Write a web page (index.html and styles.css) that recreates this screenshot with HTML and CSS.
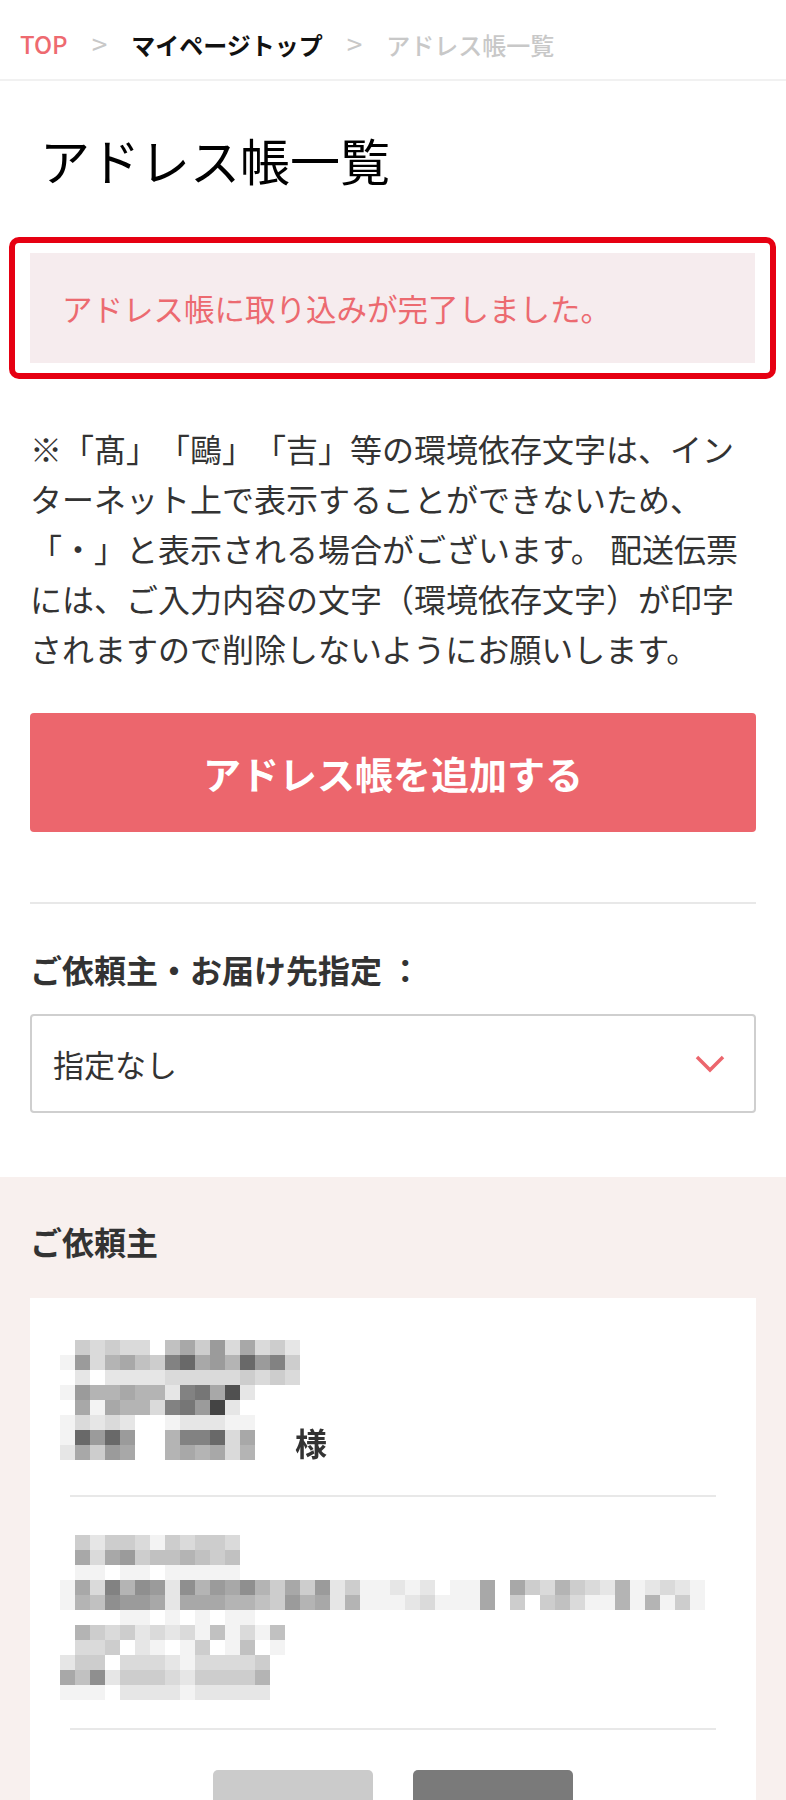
FILE: index.html
```html
<!DOCTYPE html>
<html lang="ja">
<head>
    <meta charset="UTF-8">
    <meta name="viewport" content="width=device-width, initial-scale=1.0">
    <title>アドレス帳一覧</title>
    <link rel="stylesheet" href="styles.css">
</head>
<body>
    <ul class="breadcrumb">
        <li class="crumb-top">TOP</li>
        <li class="crumb-mypage">マイページトップ</li>
        <li class="crumb-current">アドレス帳一覧</li>
    </ul>

    <div class="main">
        <h1 class="page-title">アドレス帳一覧</h1>

        <div class="alert-frame">
            <p class="alert-msg">アドレス帳に取り込みが完了しました。</p>
        </div>

        <p class="note">※「髙」「鷗」「吉」等の環境依存文字は、インターネット上で表示することができないため、「・」と表示される場合がございます。 配送伝票には、ご入力内容の文字（環境依存文字）が印字されますので削除しないようにお願いします。</p>

        <a class="add-btn" href="#">アドレス帳を追加する</a>

        <hr class="divider">

        <p class="filter-label">ご依頼主・お届け先指定 ：</p>
        <div class="select">
            <span>指定なし</span>
            <svg class="select-arrow" width="30" height="18" viewBox="0 0 30 18">
                <polyline points="2,2 15,15 28,2" fill="none" stroke="#ec666d" stroke-width="3.5"/>
            </svg>
        </div>
    </div>

    <section class="sender">
        <h2 class="sender-title">ご依頼主</h2>
        <div class="card">
            <div class="name-row">
                <canvas class="mosaic" data-rows=".bcbcc.a8b7c8cbd e7c98ab53879375b .dfddddcccccbcbc e799899d5481d... .8e899c5470d.... ecdcd..edddee... e3737..9553c8... d8b78..9898c9..."></canvas>
                <span class="honorific">様</span>
            </div>
            <hr class="card-divider">
            <canvas class="mosaic address" data-rows=".bdbbcebcbbc .8c87baa9aba .eefeefeeeee e8c5967d697869b8b7dbeededfee8.8bc9bcd9edcde e9a6778d88899ab798d9eeedceee8.bfbacee9e9ebe ....eefe.e.eef .9bcbdcdceaecea .ccbfde.eb.ea.e dbbfcccdeccccb 8a6dbbbcdbbbb9 eeefddddeddddd"></canvas>
            <hr class="card-divider lower">
            <div class="card-actions">
                <a class="btn-edit" href="#"></a>
                <a class="btn-delete" href="#"></a>
            </div>
        </div>
    </section>

    <script src="script.js"></script>
</body>
</html>
```

FILE: styles.css
```css
body {
    margin: 0;
    font-family: "Noto Sans CJK JP", "Noto Sans", sans-serif;
    color: #333;
    background: #fff;
    text-spacing-trim: space-all;
}

.breadcrumb {
    display: flex;
    align-items: center;
    height: 28px;
    margin: 0;
    padding: 30px 0 21px 20px;
    list-style: none;
    border-bottom: 2px solid #f1f1f1;
    font-size: 24px;
    line-height: 28px;
}

.breadcrumb li + li::before {
    content: ">";
    margin: 0 24px;
    color: #c8c8c8;
    font-size: 28px;
    line-height: 1;
    font-weight: 400;
}

.crumb-top {
    color: #ee6a70;
    font-weight: 500;
}

.crumb-mypage {
    color: #111;
    font-weight: 700;
}

.crumb-current {
    color: #c8c8c8;
    font-weight: 500;
}

.main {
    padding: 0 30px;
}

.page-title {
    margin: 42px 0 0;
    padding-left: 10px;
    font-size: 50px;
    line-height: 72px;
    font-weight: 400;
    color: #000;
}

/* red highlight around the flash message */
.alert-frame {
    margin: 42px -20px 0 -21px;
    padding: 10px 15px;
    border: 6px solid #e60012;
    border-radius: 10px;
}

.alert-msg {
    margin: 0;
    padding: 32px;
    background: #f6ecee;
    color: #ec6a70;
    font-size: 30.5px;
    line-height: 46px;
}

.note {
    margin: 44px 0 0;
    font-size: 32px;
    line-height: 50px;
    line-break: strict;
    color: #333;
}

.add-btn {
    display: flex;
    align-items: center;
    justify-content: center;
    height: 119px;
    margin-top: 40px;
    background: #ec666d;
    border-radius: 4px;
    color: #fff;
    font-size: 38px;
    font-weight: 700;
    text-decoration: none;
}

.divider {
    margin: 70px 0 0;
    border: 0;
    border-top: 2px solid #e8e8e8;
}

.filter-label {
    margin: 42px 0 0;
    font-size: 32px;
    line-height: 46px;
    font-weight: 700;
}

.select {
    display: flex;
    align-items: center;
    justify-content: space-between;
    box-sizing: border-box;
    height: 99px;
    margin-top: 22px;
    padding: 0 29px 0 21px;
    border: 2px solid #cfcfcf;
    border-radius: 4px;
    font-size: 31px;
}

.select-arrow {
    display: block;
}

.sender {
    margin-top: 64px;
    padding: 41px 30px 0;
    background: #f8f0ee;
}

.sender-title {
    margin: 0;
    font-size: 32px;
    line-height: 46px;
    font-weight: 700;
}

.card {
    margin-top: 34px;
    padding: 42px 30px 0;
    background: #fff;
}

.name-row {
    display: flex;
    align-items: flex-end;
}

.mosaic {
    display: block;
}

.honorific {
    margin-left: -5px;
    font-size: 32px;
    line-height: 36px;
    font-weight: 700;
}

.card-divider {
    margin: 35px 10px 0;
    border: 0;
    border-top: 2px solid #e8e8e8;
}

.card-divider.lower {
    margin-top: 28px;
}

.address {
    margin-top: 38px;
}

.card-actions {
    display: flex;
    justify-content: center;
    gap: 40px;
    margin-top: 40px;
}

.card-actions a {
    display: block;
    width: 160px;
    height: 80px;
    border-radius: 5px;
}

.btn-edit {
    background: #cbcbcb;
}

.btn-delete {
    background: #7a7a7a;
}
```

FILE: script.js
```js
// draws the pixelated (masked) name and address blocks
var shades = '0123456789abcdef';

document.querySelectorAll('.mosaic').forEach(function (el) {
    var cell = 15;
    var rows = el.dataset.rows.split(' ');
    var cols = Math.max.apply(null, rows.map(function (r) { return r.length; }));
    el.width = cols * cell;
    el.height = rows.length * cell;
    var ctx = el.getContext('2d');
    rows.forEach(function (row, y) {
        for (var x = 0; x < row.length; x++) {
            var v = shades.indexOf(row[x]);
            if (v < 0) continue;
            var g = Math.round(68 + v * 12.47);
            ctx.fillStyle = 'rgb(' + g + ',' + g + ',' + g + ')';
            ctx.fillRect(x * cell, y * cell, cell, cell);
        }
    });
});
```
